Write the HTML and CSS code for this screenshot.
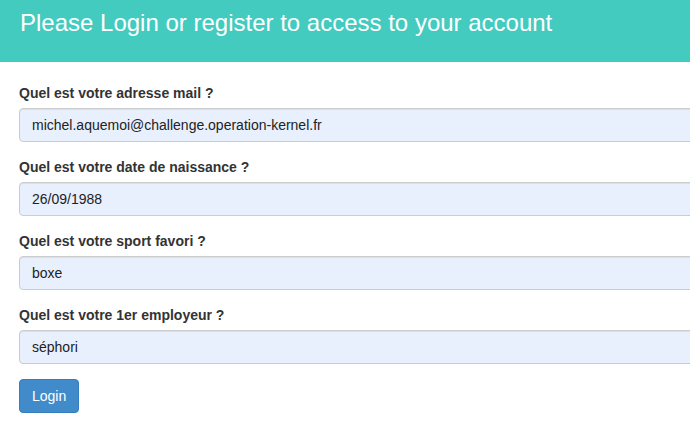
FILE: index.html
```html
<!DOCTYPE html>
<html lang="fr">
<head>
<meta charset="utf-8">
<title>Login</title>
<link rel="stylesheet" href="styles.css">
</head>
<body>
<header class="banner">
  <h1 class="banner-title">Please Login or register to access to your account</h1>
</header>
<form class="login-form">
  <div class="form-group">
    <label class="form-label">Quel est votre adresse mail ?</label>
    <input class="form-input" type="text" value="michel.aquemoi@challenge.operation-kernel.fr">
  </div>
  <div class="form-group">
    <label class="form-label">Quel est votre date de naissance ?</label>
    <input class="form-input" type="text" value="26/09/1988">
  </div>
  <div class="form-group">
    <label class="form-label">Quel est votre sport favori ?</label>
    <input class="form-input" type="text" value="boxe">
  </div>
  <div class="form-group">
    <label class="form-label">Quel est votre 1er employeur ?</label>
    <input class="form-input" type="text" value="séphori">
  </div>
  <button class="btn-login" type="button">Login</button>
</form>
</body>
</html>
```
FILE: styles.css
```css
html, body {
  margin: 0;
  padding: 0;
  overflow: hidden;
  background: #fff;
  font-family: "Liberation Sans", Arial, sans-serif;
  color: #333;
}
.banner {
  background: #43cbc0;
  height: 62px;
  padding: 0 20px;
  box-sizing: border-box;
}
.banner-title {
  margin: 0;
  padding-top: 7px;
  font-size: 24px;
  font-weight: normal;
  line-height: 32px;
  color: #fff;
}
.login-form {
  padding: 21px 19px 0;
}
.form-group {
  margin-bottom: 15px;
}
.form-label {
  display: block;
  font-size: 14px;
  font-weight: bold;
  line-height: 20px;
  margin-bottom: 5px;
  color: #333;
}
.form-input {
  display: block;
  width: 720px;
  height: 34px;
  box-sizing: border-box;
  padding: 6px 12px;
  font-family: "Liberation Sans", Arial, sans-serif;
  font-size: 14px;
  color: #222;
  background: #e8f0fe;
  border: 1px solid #ccc;
  border-radius: 4px;
  box-shadow: inset 0 1px 1px rgba(0,0,0,0.075);
  outline: none;
}
.btn-login {
  display: block;
  height: 34px;
  padding: 6px 12px;
  font-family: "Liberation Sans", Arial, sans-serif;
  font-size: 14px;
  color: #fff;
  background: #428bca;
  border: 1px solid #357ebd;
  border-radius: 4px;
}
```
